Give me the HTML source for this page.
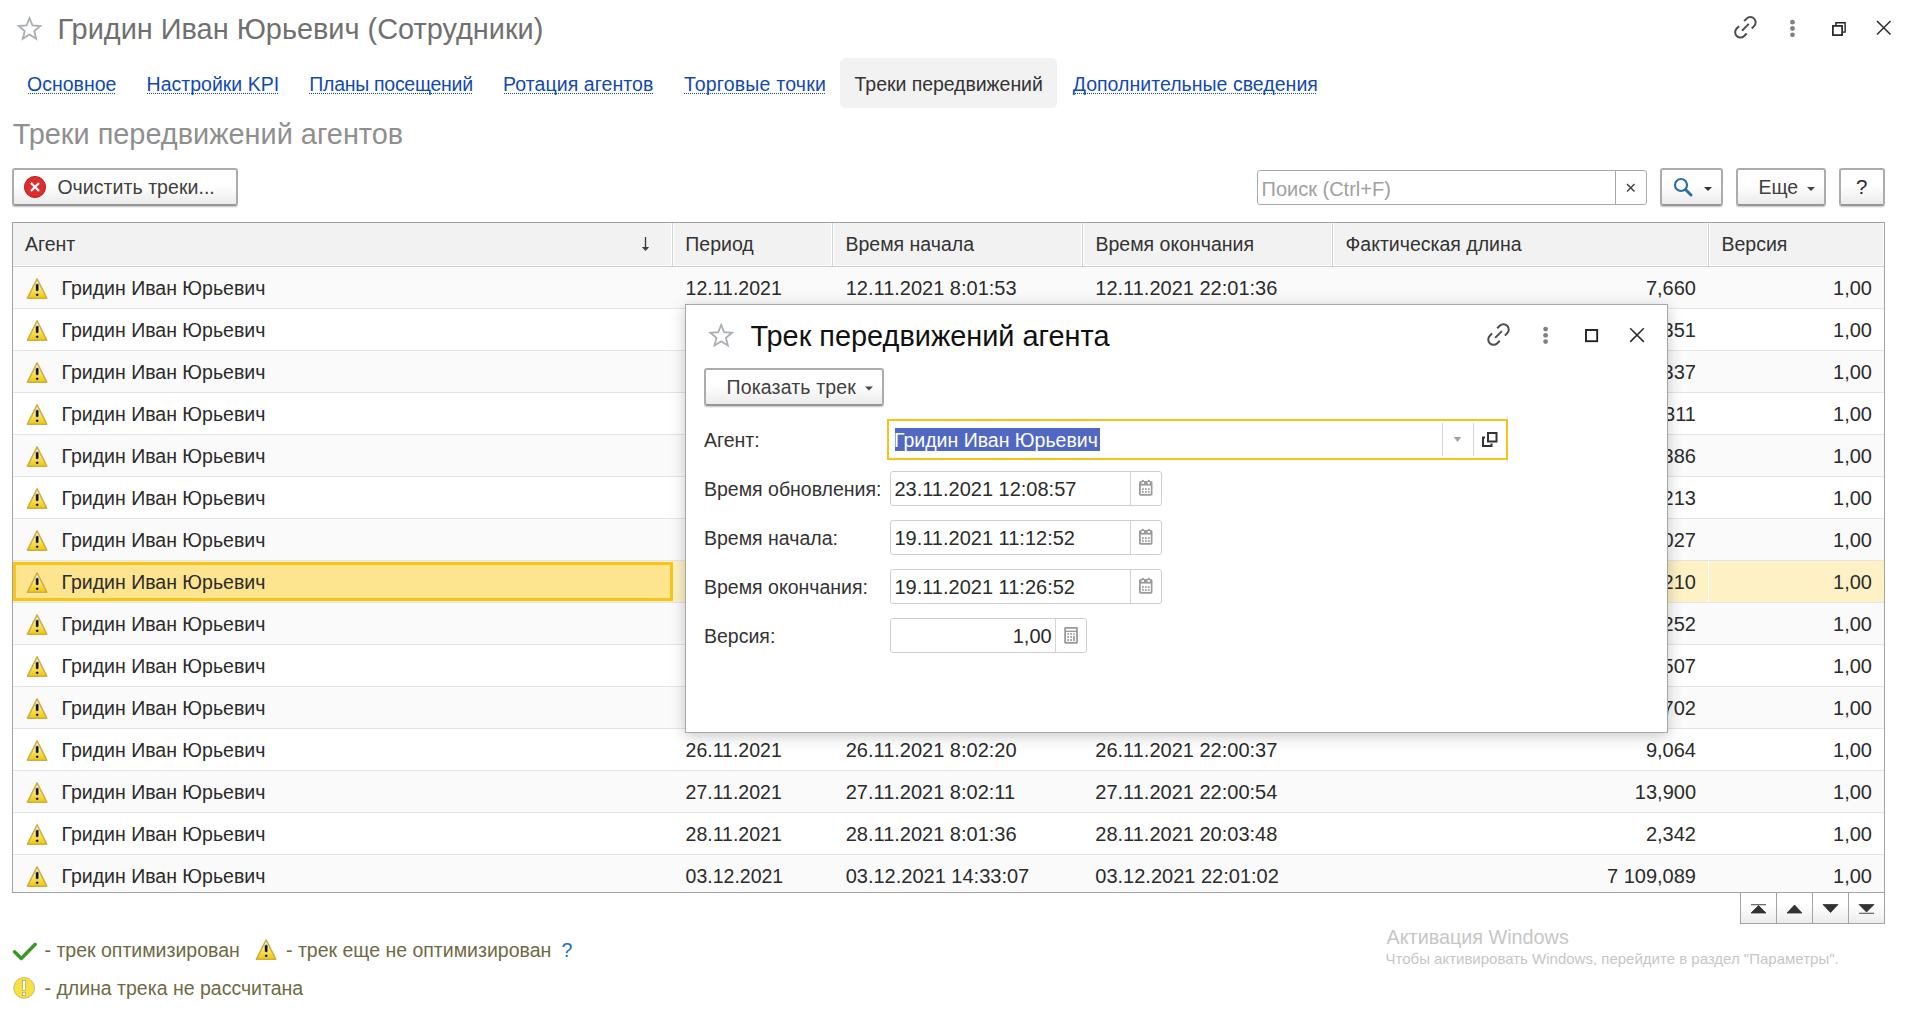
<!DOCTYPE html>
<html><head><meta charset="utf-8">
<style>
html,body{margin:0;padding:0;width:1914px;height:1012px;overflow:hidden;background:#fff;font-family:"Liberation Sans",sans-serif;}
.a{position:absolute;white-space:nowrap;line-height:1;}
.b{position:absolute;box-sizing:border-box;}
.btn{position:absolute;box-sizing:border-box;border:2px solid #acacac;border-bottom:2px solid #969696;border-radius:3px;background:linear-gradient(#ffffff 45%,#ebebeb);box-shadow:0 1px 0 #d2d2d2,0 2px 1px rgba(0,0,0,0.07);}
.dl{position:absolute;height:1px;background-image:linear-gradient(to right,#1149b4 50%,transparent 50%);background-size:2px 1px;}
</style></head><body>
<svg width="0" height="0" style="position:absolute"><defs><linearGradient id="wg" x1="0" y1="0" x2="0" y2="1"><stop offset="0" stop-color="#fffde0"/><stop offset="0.45" stop-color="#fde96a"/><stop offset="1" stop-color="#f1c800"/></linearGradient></defs></svg>

<svg style="position:absolute;left:14px;top:14px;" width="32" height="30" viewBox="14 14 32 30"><polygon points="29.50,18.10 32.44,25.45 40.34,25.98 34.26,31.05 36.20,38.72 29.50,34.50 22.80,38.72 24.74,31.05 18.66,25.98 26.56,25.45" fill="none" stroke="#a9aeb4" stroke-width="1.8" stroke-linejoin="miter"/></svg>
<div class="a" style="left:57.6px;top:15px;font-size:28.9px;color:#707070;">Гридин Иван Юрьевич (Сотрудники)</div>
<svg style="position:absolute;left:1730px;top:12px;" width="32" height="32" viewBox="1730 12 32 32"><g transform="translate(1745.4,27.3) rotate(-45)" fill="none" stroke="#4d4d4d" stroke-width="2" stroke-linecap="butt"><path d="M3.5,-5.3 L7,-5.3 A5.3,5.3 0 0 1 7,5.3 L3.7,5.3"/><path d="M-3.5,5.3 L-7,5.3 A5.3,5.3 0 0 1 -7,-5.3 L-3.7,-5.3"/><path d="M-4.8,0 L4.8,0"/></g></svg>
<svg style="position:absolute;left:1786px;top:16px;" width="14" height="24" viewBox="1786 16 14 24"><circle cx="1792.5" cy="22.2" r="2.4" fill="#808080"/><circle cx="1792.5" cy="28.5" r="2.4" fill="#808080"/><circle cx="1792.5" cy="34.8" r="2.4" fill="#808080"/></svg>
<svg style="position:absolute;left:1828px;top:18px;" width="22" height="22" viewBox="1828 18 22 22"><g fill="none" stroke="#222"><path d="M1835.9,25 V22.8 H1845.1 V32.1 H1842.7" stroke-width="1.4"/><rect x="1832.9" y="25.9" width="9.2" height="9.2" stroke-width="1.7"/></g></svg>
<svg style="position:absolute;left:1872px;top:16px;" width="24" height="24" viewBox="1872 16 24 24"><path d="M1877,21 L1890.5,34.5 M1890.5,21 L1877,34.5" stroke="#2a2a2a" stroke-width="1.5"/></svg>
<div class="b" style="left:840px;top:58px;width:217px;height:50px;border-radius:5px;background:#f2f2f2"></div>
<div class="a" style="left:27px;top:75px;font-size:19.5px;color:#1149b4;letter-spacing:0px">Основное</div>
<div class="dl" style="left:28px;top:93px;width:88px"></div>
<div class="a" style="left:146.6px;top:75px;font-size:19.5px;color:#1149b4;letter-spacing:0px">Настройки KPI</div>
<div class="dl" style="left:147px;top:93px;width:131px"></div>
<div class="a" style="left:309.3px;top:75px;font-size:19.5px;color:#1149b4;letter-spacing:-0.28px">Планы посещений</div>
<div class="dl" style="left:309px;top:93px;width:163px"></div>
<div class="a" style="left:503.1px;top:75px;font-size:19.5px;color:#1149b4;letter-spacing:0.07px">Ротация агентов</div>
<div class="dl" style="left:504px;top:93px;width:150px"></div>
<div class="a" style="left:684.1px;top:75px;font-size:19.5px;color:#1149b4;letter-spacing:0.21px">Торговые точки</div>
<div class="dl" style="left:684px;top:93px;width:141px"></div>
<div class="a" style="left:854.6px;top:75px;font-size:19.5px;color:#333;letter-spacing:-0.05px">Треки передвижений</div>
<div class="a" style="left:1072.7px;top:75px;font-size:19.5px;color:#1149b4;letter-spacing:0.03px">Дополнительные сведения</div>
<div class="dl" style="left:1073px;top:93px;width:244px"></div>
<div class="a" style="left:12.7px;top:120px;font-size:28.9px;color:#8f8f8f;">Треки передвижений агентов</div>
<div class="btn" style="left:12px;top:168px;width:226px;height:38px"></div>
<svg style="position:absolute;left:22px;top:175px;" width="26" height="26" viewBox="22 175 26 26"><circle cx="35" cy="187" r="10.6" fill="#dc2e2f" stroke="#c01818" stroke-width="0.9"/><path d="M31,183 L39,191 M39,183 L31,191" stroke="#fff" stroke-width="2.2"/></svg>
<div class="a" style="left:57.4px;top:178px;font-size:19.5px;color:#404040;letter-spacing:0.05px">Очистить треки...</div>
<div class="b" style="left:1257px;top:170px;width:390px;height:35px;border:1px solid #a8a8a8;border-radius:3px;background:#fff"></div>
<div class="b" style="left:1615px;top:171px;width:1px;height:33px;background:#a8a8a8"></div>
<div class="a" style="left:1261.5px;top:179px;font-size:20px;color:#a0a0a0;">Поиск (Ctrl+F)</div>
<svg style="position:absolute;left:1622px;top:179px;" width="18" height="18" viewBox="1622 179 18 18"><path d="M1627,184 L1634.5,191.5 M1634.5,184 L1627,191.5" stroke="#444" stroke-width="1.5"/></svg>
<div class="btn" style="left:1660px;top:168px;width:63px;height:38px"></div>
<svg style="position:absolute;left:1668px;top:172px;" width="30" height="28" viewBox="1668 172 30 28"><circle cx="1681" cy="185" r="6" fill="none" stroke="#2a6fa8" stroke-width="2.2"/><path d="M1685.5,189.5 L1691,195" stroke="#2a6fa8" stroke-width="3" stroke-linecap="round"/></svg>
<svg style="position:absolute;left:1700px;top:183px;" width="16" height="12" viewBox="1700 183 16 12"><path d="M1704,187 H1712 L1708,191 Z" fill="#333"/></svg>
<div class="btn" style="left:1736px;top:168px;width:90px;height:38px"></div>
<div class="a" style="left:1758.5px;top:178px;font-size:19.5px;color:#404040;">Еще</div>
<svg style="position:absolute;left:1804px;top:183px;" width="16" height="12" viewBox="1804 183 16 12"><path d="M1807,187 H1815 L1811,191 Z" fill="#444"/></svg>
<div class="btn" style="left:1839px;top:168px;width:46px;height:38px"></div>
<div class="a" style="left:1856px;top:177px;font-size:20.5px;color:#2a2a2a;">?</div>
<div class="b" style="left:12px;top:222px;width:1873px;height:671px;border:1px solid #a3a3a3;background:#fff;overflow:hidden">
<div class="b" style="left:0;top:0;width:1871px;height:44px;background:#f2f2f2;border-bottom:1px solid #cfcfcf"></div>
<div class="b" style="left:0px;top:0;width:659px;height:43px;border-right:1px solid #fff;border-bottom:1px solid #fff;"></div>
<div class="b" style="left:660px;top:0;width:159px;height:43px;border-right:1px solid #fff;border-bottom:1px solid #fff;border-left:1px solid #fff;"></div>
<div class="b" style="left:820px;top:0;width:249px;height:43px;border-right:1px solid #fff;border-bottom:1px solid #fff;border-left:1px solid #fff;"></div>
<div class="b" style="left:1070px;top:0;width:249px;height:43px;border-right:1px solid #fff;border-bottom:1px solid #fff;border-left:1px solid #fff;"></div>
<div class="b" style="left:1320px;top:0;width:375px;height:43px;border-right:1px solid #fff;border-bottom:1px solid #fff;border-left:1px solid #fff;"></div>
<div class="b" style="left:1696px;top:0;width:175px;height:43px;border-right:1px solid #fff;border-bottom:1px solid #fff;border-left:1px solid #fff;"></div>
<div class="b" style="left:659px;top:0;width:1px;height:43px;background:#d2d2d2"></div>
<div class="b" style="left:819px;top:0;width:1px;height:43px;background:#d2d2d2"></div>
<div class="b" style="left:1069px;top:0;width:1px;height:43px;background:#d2d2d2"></div>
<div class="b" style="left:1319px;top:0;width:1px;height:43px;background:#d2d2d2"></div>
<div class="b" style="left:1695px;top:0;width:1px;height:43px;background:#d2d2d2"></div>
<div class="a" style="left:12px;top:12px;font-size:19.5px;color:#333;">Агент</div>
<div class="a" style="left:672.3px;top:12px;font-size:19.5px;color:#333;">Период</div>
<div class="a" style="left:832.5px;top:12px;font-size:19.5px;color:#333;">Время начала</div>
<div class="a" style="left:1082.5px;top:12px;font-size:19.5px;color:#333;">Время окончания</div>
<div class="a" style="left:1332.5px;top:12px;font-size:19.5px;color:#333;">Фактическая длина</div>
<div class="a" style="left:1708.5px;top:12px;font-size:19.5px;color:#333;">Версия</div>
<svg style="position:absolute;left:626px;top:12px;" width="14" height="18" viewBox="639 235 14 18"><path d="M645.5,237 V249" stroke="#404040" stroke-width="1.4"/><path d="M641.8,247 L649.2,247 L645.5,251 Z" fill="#404040"/></svg>
<div class="b" style="left:0;top:44px;width:1871px;height:41px;background:#fafafa"></div>
<div class="b" style="left:0;top:85px;width:1871px;height:1px;background:#e4e4e4"></div>
<svg style="position:absolute;left:11.600000000000001px;top:52.60000000000002px" width="24" height="24" viewBox="-1 -1 24 24"><path d="M11.1,1.9 L20.8,21.2 L1.4,21.2 Z" fill="url(#wg)" stroke="#cfad45" stroke-width="1.5" stroke-linejoin="round"/><rect x="9.6" y="6.8" width="3.2" height="7.5" rx="1.3" fill="#111" stroke="rgba(255,255,255,0.55)" stroke-width="0.8"/><circle cx="11.2" cy="17.75" r="1.6" fill="#111" stroke="rgba(255,255,255,0.55)" stroke-width="0.8"/></svg>
<div class="a" style="left:48.5px;top:56px;font-size:19.5px;color:#2b2b2b;">Гридин Иван Юрьевич</div>
<div class="a" style="left:672.6px;top:56px;font-size:19.5px;color:#2b2b2b;">12.11.2021</div>
<div class="a" style="left:832.7px;top:55px;font-size:20px;color:#2b2b2b;">12.11.2021 8:01:53</div>
<div class="a" style="left:1082.3px;top:55px;font-size:20px;color:#2b2b2b;">12.11.2021 22:01:36</div>
<div class="a" style="right:188px;top:55px;font-size:20px;color:#2b2b2b">7,660</div>
<div class="a" style="right:12px;top:55px;font-size:20px;color:#2b2b2b">1,00</div>
<div class="b" style="left:0;top:86px;width:1871px;height:41px;background:#fff"></div>
<div class="b" style="left:0;top:127px;width:1871px;height:1px;background:#e4e4e4"></div>
<svg style="position:absolute;left:11.600000000000001px;top:94.60000000000002px" width="24" height="24" viewBox="-1 -1 24 24"><path d="M11.1,1.9 L20.8,21.2 L1.4,21.2 Z" fill="url(#wg)" stroke="#cfad45" stroke-width="1.5" stroke-linejoin="round"/><rect x="9.6" y="6.8" width="3.2" height="7.5" rx="1.3" fill="#111" stroke="rgba(255,255,255,0.55)" stroke-width="0.8"/><circle cx="11.2" cy="17.75" r="1.6" fill="#111" stroke="rgba(255,255,255,0.55)" stroke-width="0.8"/></svg>
<div class="a" style="left:48.5px;top:98px;font-size:19.5px;color:#2b2b2b;">Гридин Иван Юрьевич</div>
<div class="a" style="left:672.6px;top:98px;font-size:19.5px;color:#2b2b2b;">13.11.2021</div>
<div class="a" style="left:832.7px;top:97px;font-size:20px;color:#2b2b2b;">13.11.2021 8:02:01</div>
<div class="a" style="left:1082.3px;top:97px;font-size:20px;color:#2b2b2b;">13.11.2021 22:00:12</div>
<div class="a" style="right:188px;top:97px;font-size:20px;color:#2b2b2b">8,351</div>
<div class="a" style="right:12px;top:97px;font-size:20px;color:#2b2b2b">1,00</div>
<div class="b" style="left:0;top:128px;width:1871px;height:41px;background:#fafafa"></div>
<div class="b" style="left:0;top:169px;width:1871px;height:1px;background:#e4e4e4"></div>
<svg style="position:absolute;left:11.600000000000001px;top:136.60000000000002px" width="24" height="24" viewBox="-1 -1 24 24"><path d="M11.1,1.9 L20.8,21.2 L1.4,21.2 Z" fill="url(#wg)" stroke="#cfad45" stroke-width="1.5" stroke-linejoin="round"/><rect x="9.6" y="6.8" width="3.2" height="7.5" rx="1.3" fill="#111" stroke="rgba(255,255,255,0.55)" stroke-width="0.8"/><circle cx="11.2" cy="17.75" r="1.6" fill="#111" stroke="rgba(255,255,255,0.55)" stroke-width="0.8"/></svg>
<div class="a" style="left:48.5px;top:140px;font-size:19.5px;color:#2b2b2b;">Гридин Иван Юрьевич</div>
<div class="a" style="left:672.6px;top:140px;font-size:19.5px;color:#2b2b2b;">14.11.2021</div>
<div class="a" style="left:832.7px;top:139px;font-size:20px;color:#2b2b2b;">14.11.2021 8:01:44</div>
<div class="a" style="left:1082.3px;top:139px;font-size:20px;color:#2b2b2b;">14.11.2021 22:01:05</div>
<div class="a" style="right:188px;top:139px;font-size:20px;color:#2b2b2b">9,337</div>
<div class="a" style="right:12px;top:139px;font-size:20px;color:#2b2b2b">1,00</div>
<div class="b" style="left:0;top:170px;width:1871px;height:41px;background:#fff"></div>
<div class="b" style="left:0;top:211px;width:1871px;height:1px;background:#e4e4e4"></div>
<svg style="position:absolute;left:11.600000000000001px;top:178.60000000000002px" width="24" height="24" viewBox="-1 -1 24 24"><path d="M11.1,1.9 L20.8,21.2 L1.4,21.2 Z" fill="url(#wg)" stroke="#cfad45" stroke-width="1.5" stroke-linejoin="round"/><rect x="9.6" y="6.8" width="3.2" height="7.5" rx="1.3" fill="#111" stroke="rgba(255,255,255,0.55)" stroke-width="0.8"/><circle cx="11.2" cy="17.75" r="1.6" fill="#111" stroke="rgba(255,255,255,0.55)" stroke-width="0.8"/></svg>
<div class="a" style="left:48.5px;top:182px;font-size:19.5px;color:#2b2b2b;">Гридин Иван Юрьевич</div>
<div class="a" style="left:672.6px;top:182px;font-size:19.5px;color:#2b2b2b;">15.11.2021</div>
<div class="a" style="left:832.7px;top:181px;font-size:20px;color:#2b2b2b;">15.11.2021 8:02:10</div>
<div class="a" style="left:1082.3px;top:181px;font-size:20px;color:#2b2b2b;">15.11.2021 22:00:41</div>
<div class="a" style="right:188px;top:181px;font-size:20px;color:#2b2b2b">9,311</div>
<div class="a" style="right:12px;top:181px;font-size:20px;color:#2b2b2b">1,00</div>
<div class="b" style="left:0;top:212px;width:1871px;height:41px;background:#fafafa"></div>
<div class="b" style="left:0;top:253px;width:1871px;height:1px;background:#e4e4e4"></div>
<svg style="position:absolute;left:11.600000000000001px;top:220.60000000000002px" width="24" height="24" viewBox="-1 -1 24 24"><path d="M11.1,1.9 L20.8,21.2 L1.4,21.2 Z" fill="url(#wg)" stroke="#cfad45" stroke-width="1.5" stroke-linejoin="round"/><rect x="9.6" y="6.8" width="3.2" height="7.5" rx="1.3" fill="#111" stroke="rgba(255,255,255,0.55)" stroke-width="0.8"/><circle cx="11.2" cy="17.75" r="1.6" fill="#111" stroke="rgba(255,255,255,0.55)" stroke-width="0.8"/></svg>
<div class="a" style="left:48.5px;top:224px;font-size:19.5px;color:#2b2b2b;">Гридин Иван Юрьевич</div>
<div class="a" style="left:672.6px;top:224px;font-size:19.5px;color:#2b2b2b;">16.11.2021</div>
<div class="a" style="left:832.7px;top:223px;font-size:20px;color:#2b2b2b;">16.11.2021 8:01:58</div>
<div class="a" style="left:1082.3px;top:223px;font-size:20px;color:#2b2b2b;">16.11.2021 22:01:20</div>
<div class="a" style="right:188px;top:223px;font-size:20px;color:#2b2b2b">9,386</div>
<div class="a" style="right:12px;top:223px;font-size:20px;color:#2b2b2b">1,00</div>
<div class="b" style="left:0;top:254px;width:1871px;height:41px;background:#fff"></div>
<div class="b" style="left:0;top:295px;width:1871px;height:1px;background:#e4e4e4"></div>
<svg style="position:absolute;left:11.600000000000001px;top:262.6px" width="24" height="24" viewBox="-1 -1 24 24"><path d="M11.1,1.9 L20.8,21.2 L1.4,21.2 Z" fill="url(#wg)" stroke="#cfad45" stroke-width="1.5" stroke-linejoin="round"/><rect x="9.6" y="6.8" width="3.2" height="7.5" rx="1.3" fill="#111" stroke="rgba(255,255,255,0.55)" stroke-width="0.8"/><circle cx="11.2" cy="17.75" r="1.6" fill="#111" stroke="rgba(255,255,255,0.55)" stroke-width="0.8"/></svg>
<div class="a" style="left:48.5px;top:266px;font-size:19.5px;color:#2b2b2b;">Гридин Иван Юрьевич</div>
<div class="a" style="left:672.6px;top:266px;font-size:19.5px;color:#2b2b2b;">17.11.2021</div>
<div class="a" style="left:832.7px;top:265px;font-size:20px;color:#2b2b2b;">17.11.2021 8:02:05</div>
<div class="a" style="left:1082.3px;top:265px;font-size:20px;color:#2b2b2b;">17.11.2021 22:00:33</div>
<div class="a" style="right:188px;top:265px;font-size:20px;color:#2b2b2b">8,213</div>
<div class="a" style="right:12px;top:265px;font-size:20px;color:#2b2b2b">1,00</div>
<div class="b" style="left:0;top:296px;width:1871px;height:41px;background:#fafafa"></div>
<div class="b" style="left:0;top:337px;width:1871px;height:1px;background:#e4e4e4"></div>
<svg style="position:absolute;left:11.600000000000001px;top:304.6px" width="24" height="24" viewBox="-1 -1 24 24"><path d="M11.1,1.9 L20.8,21.2 L1.4,21.2 Z" fill="url(#wg)" stroke="#cfad45" stroke-width="1.5" stroke-linejoin="round"/><rect x="9.6" y="6.8" width="3.2" height="7.5" rx="1.3" fill="#111" stroke="rgba(255,255,255,0.55)" stroke-width="0.8"/><circle cx="11.2" cy="17.75" r="1.6" fill="#111" stroke="rgba(255,255,255,0.55)" stroke-width="0.8"/></svg>
<div class="a" style="left:48.5px;top:308px;font-size:19.5px;color:#2b2b2b;">Гридин Иван Юрьевич</div>
<div class="a" style="left:672.6px;top:308px;font-size:19.5px;color:#2b2b2b;">18.11.2021</div>
<div class="a" style="left:832.7px;top:307px;font-size:20px;color:#2b2b2b;">18.11.2021 8:01:49</div>
<div class="a" style="left:1082.3px;top:307px;font-size:20px;color:#2b2b2b;">18.11.2021 22:01:11</div>
<div class="a" style="right:188px;top:307px;font-size:20px;color:#2b2b2b">9,027</div>
<div class="a" style="right:12px;top:307px;font-size:20px;color:#2b2b2b">1,00</div>
<div class="b" style="left:0;top:338px;width:1871px;height:41px;background:#fdf1c5"></div>
<div class="b" style="left:0;top:379px;width:1871px;height:1px;background:#e4e4e4"></div>
<div class="b" style="left:0;top:339px;width:660px;height:39px;background:#fde48e;border:3px solid #f7c51a"></div>
<div class="b" style="left:1695px;top:338px;width:1px;height:41px;background:#fff"></div>
<svg style="position:absolute;left:11.600000000000001px;top:346.6px" width="24" height="24" viewBox="-1 -1 24 24"><path d="M11.1,1.9 L20.8,21.2 L1.4,21.2 Z" fill="url(#wg)" stroke="#cfad45" stroke-width="1.5" stroke-linejoin="round"/><rect x="9.6" y="6.8" width="3.2" height="7.5" rx="1.3" fill="#111" stroke="rgba(255,255,255,0.55)" stroke-width="0.8"/><circle cx="11.2" cy="17.75" r="1.6" fill="#111" stroke="rgba(255,255,255,0.55)" stroke-width="0.8"/></svg>
<div class="a" style="left:48.5px;top:350px;font-size:19.5px;color:#2b2b2b;">Гридин Иван Юрьевич</div>
<div class="a" style="left:672.6px;top:350px;font-size:19.5px;color:#2b2b2b;">19.11.2021</div>
<div class="a" style="left:832.7px;top:349px;font-size:20px;color:#2b2b2b;">19.11.2021 11:12:52</div>
<div class="a" style="left:1082.3px;top:349px;font-size:20px;color:#2b2b2b;">19.11.2021 11:26:52</div>
<div class="a" style="right:188px;top:349px;font-size:20px;color:#2b2b2b">1,210</div>
<div class="a" style="right:12px;top:349px;font-size:20px;color:#2b2b2b">1,00</div>
<div class="b" style="left:0;top:380px;width:1871px;height:41px;background:#fafafa"></div>
<div class="b" style="left:0;top:421px;width:1871px;height:1px;background:#e4e4e4"></div>
<svg style="position:absolute;left:11.600000000000001px;top:388.6px" width="24" height="24" viewBox="-1 -1 24 24"><path d="M11.1,1.9 L20.8,21.2 L1.4,21.2 Z" fill="url(#wg)" stroke="#cfad45" stroke-width="1.5" stroke-linejoin="round"/><rect x="9.6" y="6.8" width="3.2" height="7.5" rx="1.3" fill="#111" stroke="rgba(255,255,255,0.55)" stroke-width="0.8"/><circle cx="11.2" cy="17.75" r="1.6" fill="#111" stroke="rgba(255,255,255,0.55)" stroke-width="0.8"/></svg>
<div class="a" style="left:48.5px;top:392px;font-size:19.5px;color:#2b2b2b;">Гридин Иван Юрьевич</div>
<div class="a" style="left:672.6px;top:392px;font-size:19.5px;color:#2b2b2b;">20.11.2021</div>
<div class="a" style="left:832.7px;top:391px;font-size:20px;color:#2b2b2b;">20.11.2021 8:02:14</div>
<div class="a" style="left:1082.3px;top:391px;font-size:20px;color:#2b2b2b;">20.11.2021 22:00:58</div>
<div class="a" style="right:188px;top:391px;font-size:20px;color:#2b2b2b">9,252</div>
<div class="a" style="right:12px;top:391px;font-size:20px;color:#2b2b2b">1,00</div>
<div class="b" style="left:0;top:422px;width:1871px;height:41px;background:#fff"></div>
<div class="b" style="left:0;top:463px;width:1871px;height:1px;background:#e4e4e4"></div>
<svg style="position:absolute;left:11.600000000000001px;top:430.6px" width="24" height="24" viewBox="-1 -1 24 24"><path d="M11.1,1.9 L20.8,21.2 L1.4,21.2 Z" fill="url(#wg)" stroke="#cfad45" stroke-width="1.5" stroke-linejoin="round"/><rect x="9.6" y="6.8" width="3.2" height="7.5" rx="1.3" fill="#111" stroke="rgba(255,255,255,0.55)" stroke-width="0.8"/><circle cx="11.2" cy="17.75" r="1.6" fill="#111" stroke="rgba(255,255,255,0.55)" stroke-width="0.8"/></svg>
<div class="a" style="left:48.5px;top:434px;font-size:19.5px;color:#2b2b2b;">Гридин Иван Юрьевич</div>
<div class="a" style="left:672.6px;top:434px;font-size:19.5px;color:#2b2b2b;">21.11.2021</div>
<div class="a" style="left:832.7px;top:433px;font-size:20px;color:#2b2b2b;">21.11.2021 8:01:39</div>
<div class="a" style="left:1082.3px;top:433px;font-size:20px;color:#2b2b2b;">21.11.2021 22:01:16</div>
<div class="a" style="right:188px;top:433px;font-size:20px;color:#2b2b2b">9,507</div>
<div class="a" style="right:12px;top:433px;font-size:20px;color:#2b2b2b">1,00</div>
<div class="b" style="left:0;top:464px;width:1871px;height:41px;background:#fafafa"></div>
<div class="b" style="left:0;top:505px;width:1871px;height:1px;background:#e4e4e4"></div>
<svg style="position:absolute;left:11.600000000000001px;top:472.6px" width="24" height="24" viewBox="-1 -1 24 24"><path d="M11.1,1.9 L20.8,21.2 L1.4,21.2 Z" fill="url(#wg)" stroke="#cfad45" stroke-width="1.5" stroke-linejoin="round"/><rect x="9.6" y="6.8" width="3.2" height="7.5" rx="1.3" fill="#111" stroke="rgba(255,255,255,0.55)" stroke-width="0.8"/><circle cx="11.2" cy="17.75" r="1.6" fill="#111" stroke="rgba(255,255,255,0.55)" stroke-width="0.8"/></svg>
<div class="a" style="left:48.5px;top:476px;font-size:19.5px;color:#2b2b2b;">Гридин Иван Юрьевич</div>
<div class="a" style="left:672.6px;top:476px;font-size:19.5px;color:#2b2b2b;">22.11.2021</div>
<div class="a" style="left:832.7px;top:475px;font-size:20px;color:#2b2b2b;">22.11.2021 8:02:07</div>
<div class="a" style="left:1082.3px;top:475px;font-size:20px;color:#2b2b2b;">22.11.2021 22:00:49</div>
<div class="a" style="right:188px;top:475px;font-size:20px;color:#2b2b2b">8,702</div>
<div class="a" style="right:12px;top:475px;font-size:20px;color:#2b2b2b">1,00</div>
<div class="b" style="left:0;top:506px;width:1871px;height:41px;background:#fff"></div>
<div class="b" style="left:0;top:547px;width:1871px;height:1px;background:#e4e4e4"></div>
<svg style="position:absolute;left:11.600000000000001px;top:514.6px" width="24" height="24" viewBox="-1 -1 24 24"><path d="M11.1,1.9 L20.8,21.2 L1.4,21.2 Z" fill="url(#wg)" stroke="#cfad45" stroke-width="1.5" stroke-linejoin="round"/><rect x="9.6" y="6.8" width="3.2" height="7.5" rx="1.3" fill="#111" stroke="rgba(255,255,255,0.55)" stroke-width="0.8"/><circle cx="11.2" cy="17.75" r="1.6" fill="#111" stroke="rgba(255,255,255,0.55)" stroke-width="0.8"/></svg>
<div class="a" style="left:48.5px;top:518px;font-size:19.5px;color:#2b2b2b;">Гридин Иван Юрьевич</div>
<div class="a" style="left:672.6px;top:518px;font-size:19.5px;color:#2b2b2b;">26.11.2021</div>
<div class="a" style="left:832.7px;top:517px;font-size:20px;color:#2b2b2b;">26.11.2021 8:02:20</div>
<div class="a" style="left:1082.3px;top:517px;font-size:20px;color:#2b2b2b;">26.11.2021 22:00:37</div>
<div class="a" style="right:188px;top:517px;font-size:20px;color:#2b2b2b">9,064</div>
<div class="a" style="right:12px;top:517px;font-size:20px;color:#2b2b2b">1,00</div>
<div class="b" style="left:0;top:548px;width:1871px;height:41px;background:#fafafa"></div>
<div class="b" style="left:0;top:589px;width:1871px;height:1px;background:#e4e4e4"></div>
<svg style="position:absolute;left:11.600000000000001px;top:556.6px" width="24" height="24" viewBox="-1 -1 24 24"><path d="M11.1,1.9 L20.8,21.2 L1.4,21.2 Z" fill="url(#wg)" stroke="#cfad45" stroke-width="1.5" stroke-linejoin="round"/><rect x="9.6" y="6.8" width="3.2" height="7.5" rx="1.3" fill="#111" stroke="rgba(255,255,255,0.55)" stroke-width="0.8"/><circle cx="11.2" cy="17.75" r="1.6" fill="#111" stroke="rgba(255,255,255,0.55)" stroke-width="0.8"/></svg>
<div class="a" style="left:48.5px;top:560px;font-size:19.5px;color:#2b2b2b;">Гридин Иван Юрьевич</div>
<div class="a" style="left:672.6px;top:560px;font-size:19.5px;color:#2b2b2b;">27.11.2021</div>
<div class="a" style="left:832.7px;top:559px;font-size:20px;color:#2b2b2b;">27.11.2021 8:02:11</div>
<div class="a" style="left:1082.3px;top:559px;font-size:20px;color:#2b2b2b;">27.11.2021 22:00:54</div>
<div class="a" style="right:188px;top:559px;font-size:20px;color:#2b2b2b">13,900</div>
<div class="a" style="right:12px;top:559px;font-size:20px;color:#2b2b2b">1,00</div>
<div class="b" style="left:0;top:590px;width:1871px;height:41px;background:#fff"></div>
<div class="b" style="left:0;top:631px;width:1871px;height:1px;background:#e4e4e4"></div>
<svg style="position:absolute;left:11.600000000000001px;top:598.6px" width="24" height="24" viewBox="-1 -1 24 24"><path d="M11.1,1.9 L20.8,21.2 L1.4,21.2 Z" fill="url(#wg)" stroke="#cfad45" stroke-width="1.5" stroke-linejoin="round"/><rect x="9.6" y="6.8" width="3.2" height="7.5" rx="1.3" fill="#111" stroke="rgba(255,255,255,0.55)" stroke-width="0.8"/><circle cx="11.2" cy="17.75" r="1.6" fill="#111" stroke="rgba(255,255,255,0.55)" stroke-width="0.8"/></svg>
<div class="a" style="left:48.5px;top:602px;font-size:19.5px;color:#2b2b2b;">Гридин Иван Юрьевич</div>
<div class="a" style="left:672.6px;top:602px;font-size:19.5px;color:#2b2b2b;">28.11.2021</div>
<div class="a" style="left:832.7px;top:601px;font-size:20px;color:#2b2b2b;">28.11.2021 8:01:36</div>
<div class="a" style="left:1082.3px;top:601px;font-size:20px;color:#2b2b2b;">28.11.2021 20:03:48</div>
<div class="a" style="right:188px;top:601px;font-size:20px;color:#2b2b2b">2,342</div>
<div class="a" style="right:12px;top:601px;font-size:20px;color:#2b2b2b">1,00</div>
<div class="b" style="left:0;top:632px;width:1871px;height:41px;background:#fafafa"></div>
<svg style="position:absolute;left:11.600000000000001px;top:640.6px" width="24" height="24" viewBox="-1 -1 24 24"><path d="M11.1,1.9 L20.8,21.2 L1.4,21.2 Z" fill="url(#wg)" stroke="#cfad45" stroke-width="1.5" stroke-linejoin="round"/><rect x="9.6" y="6.8" width="3.2" height="7.5" rx="1.3" fill="#111" stroke="rgba(255,255,255,0.55)" stroke-width="0.8"/><circle cx="11.2" cy="17.75" r="1.6" fill="#111" stroke="rgba(255,255,255,0.55)" stroke-width="0.8"/></svg>
<div class="a" style="left:48.5px;top:644px;font-size:19.5px;color:#2b2b2b;">Гридин Иван Юрьевич</div>
<div class="a" style="left:672.6px;top:644px;font-size:19.5px;color:#2b2b2b;">03.12.2021</div>
<div class="a" style="left:832.7px;top:643px;font-size:20px;color:#2b2b2b;">03.12.2021 14:33:07</div>
<div class="a" style="left:1082.3px;top:643px;font-size:20px;color:#2b2b2b;">03.12.2021 22:01:02</div>
<div class="a" style="right:188px;top:643px;font-size:20px;color:#2b2b2b">7 109,089</div>
<div class="a" style="right:12px;top:643px;font-size:20px;color:#2b2b2b">1,00</div>
</div>
<div class="b" style="left:1740px;top:892px;width:145px;height:32px;border:1px solid #a3a3a3;background:linear-gradient(#fff 40%,#ececec)"></div>
<div class="b" style="left:1776px;top:893px;width:1px;height:30px;background:#a3a3a3"></div>
<div class="b" style="left:1812px;top:893px;width:1px;height:30px;background:#a3a3a3"></div>
<div class="b" style="left:1848px;top:893px;width:1px;height:30px;background:#a3a3a3"></div>
<svg style="position:absolute;left:1745px;top:898px;" width="135" height="20" viewBox="1745 898 135 20"><g fill="#333"><rect x="1751" y="904" width="15" height="1.3" fill="#707070"/><path d="M1751,913 L1758.5,905.5 L1766,913 Z" stroke="#333" stroke-width="0.8" stroke-linejoin="round"/><path d="M1787,913 L1794.5,905 L1802,913 Z" stroke="#333" stroke-width="0.8" stroke-linejoin="round"/><path d="M1823,904.5 L1838,904.5 L1830.5,912.5 Z" stroke="#333" stroke-width="0.8" stroke-linejoin="round"/><path d="M1859,904.5 L1874,904.5 L1866.5,912 Z" stroke="#333" stroke-width="0.8" stroke-linejoin="round"/><rect x="1859" y="912.7" width="15" height="1.3" fill="#707070"/></g></svg>
<svg style="position:absolute;left:10px;top:938px;" width="30" height="26" viewBox="10 938 30 26"><path d="M14.5,951.8 L21.3,958.5 L35.2,944.3" fill="none" stroke="#389a22" stroke-width="3.4" stroke-linecap="round" stroke-linejoin="round"/></svg>
<div class="a" style="left:44.5px;top:941px;font-size:19.5px;color:#6e6a44;">- трек оптимизирован</div>
<svg style="position:absolute;left:253.6px;top:937.3px" width="24" height="24" viewBox="-1 -1 24 24"><path d="M11.1,1.9 L20.8,21.2 L1.4,21.2 Z" fill="url(#wg)" stroke="#cfad45" stroke-width="1.5" stroke-linejoin="round"/><rect x="9.6" y="6.8" width="3.2" height="7.5" rx="1.3" fill="#111" stroke="rgba(255,255,255,0.55)" stroke-width="0.8"/><circle cx="11.2" cy="17.75" r="1.6" fill="#111" stroke="rgba(255,255,255,0.55)" stroke-width="0.8"/></svg>
<div class="a" style="left:286px;top:941px;font-size:19.5px;color:#6e6a44;">- трек еще не оптимизирован</div>
<div class="a" style="left:561.5px;top:941px;font-size:19.5px;color:#1a6fc4;">?</div>
<svg style="position:absolute;left:11px;top:975px;" width="26" height="26" viewBox="11 975 26 26"><circle cx="24.15" cy="987.9" r="10.4" fill="#f5e242" stroke="#c9b562" stroke-width="0.9"/><rect x="22.5" y="980.6" width="3.1" height="9.8" fill="#fff" stroke="#9c9160" stroke-width="0.6"/><rect x="22.5" y="992.8" width="3.1" height="2.7" fill="#fff" stroke="#9c9160" stroke-width="0.6"/></svg>
<div class="a" style="left:44.5px;top:979px;font-size:19.5px;color:#6e6a44;">- длина трека не рассчитана</div>
<div class="a" style="left:1386.5px;top:928px;font-size:19.8px;color:#c6c6c6;">Активация Windows</div>
<div class="a" style="left:1385.5px;top:951px;font-size:15px;color:#c6c6c6;">Чтобы активировать Windows, перейдите в раздел "Параметры".</div>
<div class="b" style="left:685px;top:304px;width:983px;height:429px;border:1px solid #a6a6a6;background:#fff;box-shadow:0 3px 14px rgba(0,0,0,0.22);z-index:10">
<svg style="position:absolute;left:20px;top:15px;" width="30" height="30" viewBox="706 320 30 30"><polygon points="721.20,324.90 724.14,332.25 732.04,332.78 725.96,337.85 727.90,345.52 721.20,341.30 714.50,345.52 716.44,337.85 710.36,332.78 718.26,332.25" fill="none" stroke="#a9aeb4" stroke-width="1.8" stroke-linejoin="miter"/></svg>
<div class="a" style="left:64.5px;top:17px;font-size:28.9px;color:#111;">Трек передвижений агента</div>
<svg style="position:absolute;left:797px;top:14px;" width="32" height="32" viewBox="1483 319 32 32"><g transform="translate(1498.5,334.5) rotate(-45)" fill="none" stroke="#4d4d4d" stroke-width="2" stroke-linecap="butt"><path d="M3.5,-5.3 L7,-5.3 A5.3,5.3 0 0 1 7,5.3 L3.7,5.3"/><path d="M-3.5,5.3 L-7,5.3 A5.3,5.3 0 0 1 -7,-5.3 L-3.7,-5.3"/><path d="M-4.8,0 L4.8,0"/></g></svg>
<svg style="position:absolute;left:854px;top:18px;" width="12" height="24" viewBox="1540 323 12 24"><circle cx="1545.6" cy="329.1" r="2.4" fill="#808080"/><circle cx="1545.6" cy="335.35" r="2.4" fill="#808080"/><circle cx="1545.6" cy="341.6" r="2.4" fill="#808080"/></svg>
<svg style="position:absolute;left:894px;top:19px;" width="24" height="24" viewBox="1580 324 24 24"><rect x="1586" y="330" width="11.2" height="11.2" fill="none" stroke="#222" stroke-width="1.9"/></svg>
<svg style="position:absolute;left:939px;top:18px;" width="24" height="24" viewBox="1625 323 24 24"><path d="M1630.2,328.3 L1643.8,341.9 M1643.8,328.3 L1630.2,341.9" stroke="#2a2a2a" stroke-width="1.5"/></svg>
<div class="btn" style="left:18px;top:63px;width:180px;height:38px"></div>
<div class="a" style="left:40.5px;top:73px;font-size:19.5px;color:#404040;letter-spacing:0.15px">Показать трек</div>
<svg style="position:absolute;left:175px;top:77px;" width="16" height="12" viewBox="861 382 16 12"><path d="M865,386.5 H873 L869,390.5 Z" fill="#4a4a4a"/></svg>
<div class="a" style="left:18px;top:126px;font-size:19.5px;color:#333;">Агент:</div>
<div class="b" style="left:201px;top:114px;width:621px;height:41px;border:2px solid #f8c414;background:#fff"></div>
<div class="b" style="left:209px;top:123px;width:205px;height:23px;background:#5068c2"></div>
<div class="a" style="left:208px;top:126px;font-size:19.5px;color:#fff;">Гридин Иван Юрьевич</div>
<div class="b" style="left:756px;top:118px;width:1px;height:33px;background:#d4d4d4"></div>
<div class="b" style="left:787px;top:118px;width:1px;height:33px;background:#d4d4d4"></div>
<svg style="position:absolute;left:764px;top:128px;" width="16" height="14" viewBox="1450 433 16 14"><path d="M1453.8,437 H1461.2 L1457.5,442 Z" fill="#a0a0a0"/></svg>
<svg style="position:absolute;left:792px;top:123px;" width="24" height="24" viewBox="1478 428 24 24"><g fill="none" stroke="#333" stroke-width="2"><rect x="1488" y="433" width="8.5" height="8.5"/><path d="M1485,437.5 H1483 V446 H1491.5 V443.5"/></g></svg>
<div class="a" style="left:18px;top:175px;font-size:19.5px;color:#333;">Время обновления:</div>
<div class="b" style="left:204px;top:166px;width:272px;height:35px;border:1px solid #cfcfcf;border-radius:3px;background:#fff"></div>
<div class="b" style="left:444px;top:167px;width:1px;height:33px;background:#d4d4d4"></div>
<div class="a" style="left:208.39999999999998px;top:174px;font-size:20px;color:#2b2b2b;">23.11.2021 12:08:57</div>
<svg style="position:absolute;left:451.20000000000005px;top:172px;" width="18" height="22" viewBox="1137.2 477 18 22"><rect x="1139.2" y="481.1" width="13.5" height="14.6" rx="1.6" fill="#9b9b9b"/><rect x="1141.0" y="485.6" width="10" height="8.3" fill="#fff"/><rect x="1141.8" y="481.9" width="2.4" height="1.9" fill="#fff"/><rect x="1147.8" y="481.9" width="2.4" height="1.9" fill="#fff"/><rect x="1142.0" y="479.9" width="2" height="2.2" fill="#9b9b9b"/><rect x="1148.0" y="479.9" width="2" height="2.2" fill="#9b9b9b"/><rect x="1142.2" y="488.2" width="1.8" height="1.7" fill="#9b9b9b"/><rect x="1142.2" y="491.09999999999997" width="1.8" height="1.7" fill="#9b9b9b"/><rect x="1145.15" y="488.2" width="1.8" height="1.7" fill="#9b9b9b"/><rect x="1145.15" y="491.09999999999997" width="1.8" height="1.7" fill="#9b9b9b"/><rect x="1148.1000000000001" y="488.2" width="1.8" height="1.7" fill="#9b9b9b"/><rect x="1148.1000000000001" y="491.09999999999997" width="1.8" height="1.7" fill="#9b9b9b"/></svg>
<div class="a" style="left:18px;top:224px;font-size:19.5px;color:#333;">Время начала:</div>
<div class="b" style="left:204px;top:215px;width:272px;height:35px;border:1px solid #cfcfcf;border-radius:3px;background:#fff"></div>
<div class="b" style="left:444px;top:216px;width:1px;height:33px;background:#d4d4d4"></div>
<div class="a" style="left:208.39999999999998px;top:223px;font-size:20px;color:#2b2b2b;">19.11.2021 11:12:52</div>
<svg style="position:absolute;left:451.20000000000005px;top:221px;" width="18" height="22" viewBox="1137.2 526 18 22"><rect x="1139.2" y="530.1" width="13.5" height="14.6" rx="1.6" fill="#9b9b9b"/><rect x="1141.0" y="534.6" width="10" height="8.3" fill="#fff"/><rect x="1141.8" y="530.9" width="2.4" height="1.9" fill="#fff"/><rect x="1147.8" y="530.9" width="2.4" height="1.9" fill="#fff"/><rect x="1142.0" y="528.9" width="2" height="2.2" fill="#9b9b9b"/><rect x="1148.0" y="528.9" width="2" height="2.2" fill="#9b9b9b"/><rect x="1142.2" y="537.2" width="1.8" height="1.7" fill="#9b9b9b"/><rect x="1142.2" y="540.1" width="1.8" height="1.7" fill="#9b9b9b"/><rect x="1145.15" y="537.2" width="1.8" height="1.7" fill="#9b9b9b"/><rect x="1145.15" y="540.1" width="1.8" height="1.7" fill="#9b9b9b"/><rect x="1148.1000000000001" y="537.2" width="1.8" height="1.7" fill="#9b9b9b"/><rect x="1148.1000000000001" y="540.1" width="1.8" height="1.7" fill="#9b9b9b"/></svg>
<div class="a" style="left:18px;top:273px;font-size:19.5px;color:#333;">Время окончания:</div>
<div class="b" style="left:204px;top:264px;width:272px;height:35px;border:1px solid #cfcfcf;border-radius:3px;background:#fff"></div>
<div class="b" style="left:444px;top:265px;width:1px;height:33px;background:#d4d4d4"></div>
<div class="a" style="left:208.39999999999998px;top:272px;font-size:20px;color:#2b2b2b;">19.11.2021 11:26:52</div>
<svg style="position:absolute;left:451.20000000000005px;top:270px;" width="18" height="22" viewBox="1137.2 575 18 22"><rect x="1139.2" y="579.1" width="13.5" height="14.6" rx="1.6" fill="#9b9b9b"/><rect x="1141.0" y="583.6" width="10" height="8.3" fill="#fff"/><rect x="1141.8" y="579.9" width="2.4" height="1.9" fill="#fff"/><rect x="1147.8" y="579.9" width="2.4" height="1.9" fill="#fff"/><rect x="1142.0" y="577.9" width="2" height="2.2" fill="#9b9b9b"/><rect x="1148.0" y="577.9" width="2" height="2.2" fill="#9b9b9b"/><rect x="1142.2" y="586.2" width="1.8" height="1.7" fill="#9b9b9b"/><rect x="1142.2" y="589.1" width="1.8" height="1.7" fill="#9b9b9b"/><rect x="1145.15" y="586.2" width="1.8" height="1.7" fill="#9b9b9b"/><rect x="1145.15" y="589.1" width="1.8" height="1.7" fill="#9b9b9b"/><rect x="1148.1000000000001" y="586.2" width="1.8" height="1.7" fill="#9b9b9b"/><rect x="1148.1000000000001" y="589.1" width="1.8" height="1.7" fill="#9b9b9b"/></svg>
<div class="a" style="left:18px;top:322px;font-size:19.5px;color:#333;">Версия:</div>
<div class="b" style="left:204px;top:313px;width:197px;height:35px;border:1px solid #cfcfcf;border-radius:3px;background:#fff"></div>
<div class="b" style="left:369px;top:314px;width:1px;height:33px;background:#d4d4d4"></div>
<div class="a" style="left:304.70000000000005px;width:61px;text-align:right;top:321px;font-size:20px;color:#2b2b2b">1,00</div>
<svg style="position:absolute;left:376px;top:319px;" width="18" height="22" viewBox="1062 624 18 22"><rect x="1064.2" y="626.9" width="13.7" height="16.8" rx="1.2" fill="#9b9b9b"/><rect x="1066" y="628.8" width="10.1" height="1.8" fill="#fff"/><rect x="1066" y="632" width="10.1" height="9.9" fill="#fff"/><g fill="#9b9b9b"><rect x="1067.2" y="633.2" width="1.8" height="1.6"/><rect x="1070.2" y="633.2" width="1.8" height="1.6"/><rect x="1073.1" y="633.2" width="1.8" height="1.6"/><rect x="1067.2" y="636.1" width="1.8" height="1.8"/><rect x="1070.2" y="636.1" width="1.8" height="1.8"/><rect x="1073.1" y="636.1" width="1.8" height="4.8"/><rect x="1067.2" y="639.1" width="1.8" height="1.8"/><rect x="1070.2" y="639.1" width="1.8" height="1.8"/></g></svg>
</div>
</body></html>
